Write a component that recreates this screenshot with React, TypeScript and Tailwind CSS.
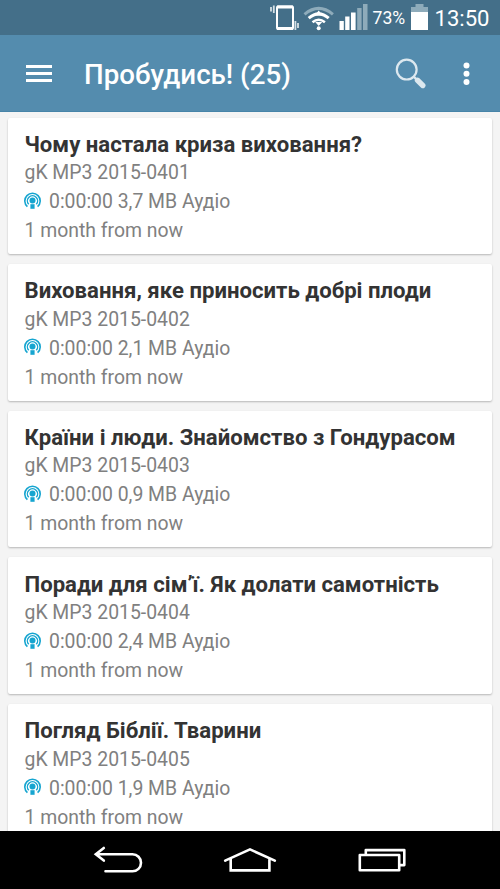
const items = [
  { title: "Чому настала криза виховання?", code: "gK MP3 2015-0401", size: "3,7 MB" },
  { title: "Виховання, яке приносить добрі плоди", code: "gK MP3 2015-0402", size: "2,1 MB" },
  { title: "Країни і люди. Знайомство з Гондурасом", code: "gK MP3 2015-0403", size: "0,9 MB" },
  { title: "Поради для сім’ї. Як долати самотність", code: "gK MP3 2015-0404", size: "2,4 MB" },
  { title: "Погляд Біблії. Тварини", code: "gK MP3 2015-0405", size: "1,9 MB" },
]

function StatusBar() {
  return (
    <div className="flex h-[35px] shrink-0 bg-[#446f89] text-white">
      <svg className="ml-[270px] shrink-0" width="99" height="35" viewBox="270 0 99 35" fill="none">
        {/* vibrate */}
        <rect x="277" y="6.5" width="16" height="22.5" rx="1" stroke="#fff" strokeWidth="2" />
        <path d="M277 7h16M277 28.5h16" stroke="#fff" strokeWidth="3" />
        <path d="M271 7v4.5M273.8 5.5v7.5M295.4 21v9M298 23v5" stroke="#d5e0e6" strokeWidth="1.8" />
        {/* wifi */}
        <path d="M304.5 14.3Q318.7 2.5 332.9 14.3" stroke="#8eabba" strokeWidth="3" />
        <path d="M308.7 18.2Q318.7 9.5 328.7 18.2" stroke="#fff" strokeWidth="3" />
        <path d="M312.5 22.2Q318.7 17.3 324.9 22.2" stroke="#fff" strokeWidth="2.6" />
        <path d="M314.8 15.5l3.9-5 3.9 5zM315.2 22h7l-3.5 4z" fill="#fff" />
        <circle cx="318.7" cy="28.2" r="2" fill="#fff" />
        {/* signal */}
        <path d="M339.5 21h4.3v9h-4.3zM345.2 16.5h4.3v13.5h-4.3zM351 12.5h4.6v17.5h-4.6z" fill="#fff" />
        <path d="M357.2 8h4.4v22h-4.4zM363 4h4.5v26h-4.5z" fill="#8eabba" />
      </svg>
      <span className="ml-[3.5px] w-[38.5px] whitespace-nowrap text-[17.6px] leading-[36px]">73%</span>
      <svg className="shrink-0" width="17" height="35" viewBox="0 0 17 35">
        <path d="M4.5 4h8v3H17v5H0V7h4.5z" fill="#8eabba" />
        <path d="M0 12h17v18H0z" fill="#fff" />
      </svg>
      <span className="ml-[6.5px] whitespace-nowrap text-[22.1px] leading-[37px]">13:50</span>
    </div>
  )
}

function Header() {
  return (
    <header className="flex h-[77px] shrink-0 items-center border-b border-[#4784a8] bg-[#548cae] pt-[2px] text-white">
      <svg className="ml-[26px] shrink-0" width="26" height="20" viewBox="0 0 26 20">
        <path d="M0 2.5h26M0 9.5h26M0 16.5h26" stroke="#fff" strokeWidth="3" />
      </svg>
      <h1 className="ml-8 flex-1 whitespace-nowrap pt-[2px] text-[27.7px] font-medium leading-9">Пробудись! (25)</h1>
      <svg className="mr-[36px] shrink-0" width="32" height="32" viewBox="0 0 32 32" fill="none" stroke="#dce8ef">
        <circle cx="11.7" cy="11.6" r="9.9" strokeWidth="2.2" />
        <path d="M18.7 18.6l3.5 3.5" strokeWidth="2.2" />
        <path d="M22.5 22.3l5.3 5.2" strokeWidth="5.4" strokeLinecap="round" />
      </svg>
      <svg className="mr-[30px] shrink-0" width="7" height="24" viewBox="0 0 7 24" fill="#fff">
        <circle cx="3.5" cy="3.5" r="3" />
        <circle cx="3.5" cy="11.8" r="3" />
        <circle cx="3.5" cy="20" r="3" />
      </svg>
    </header>
  )
}

function PodcastIcon() {
  return (
    <svg className="-ml-[0.5px] mr-2 mb-[3px] shrink-0" width="17" height="17" viewBox="0 0 17 17" fill="none" stroke="#16a5d0">
      <path d="M3.4 14.7A7.7 7.7 0 1 1 13.6 14.7" strokeWidth="1.6" />
      <path d="M4.7 12.3A5.1 5.1 0 1 1 12.3 12.3" strokeWidth="1.4" />
      <circle cx="8.5" cy="8.5" r="3" fill="#16a5d0" stroke="none" />
      <path d="M6.4 12.2h4.2v4.6H6.4z" fill="#16a5d0" stroke="none" />
    </svg>
  )
}

export default function App() {
  return (
    <div className="flex h-[889px] w-[500px] flex-col overflow-hidden bg-[#f4f4f4] font-[Roboto,sans-serif]">
      <StatusBar />
      <Header />
      <main className="flex min-h-0 flex-1 flex-col gap-[10px] overflow-hidden px-2 pt-[5.5px]">
        {items.map(item => (
          <article
            key={item.code}
            className="h-[136.6px] shrink-0 whitespace-nowrap rounded-[2px] bg-white pl-[16.5px] pt-[12.4px] text-[19.4px] leading-[29px] text-[#808080] shadow-[0_1px_2px_rgba(0,0,0,0.25)]"
          >
            <h2 className="-mb-[0.6px] text-[22.15px] font-bold text-[#333]">{item.title}</h2>
            <p>{item.code}</p>
            <p className="flex items-center">
              <PodcastIcon />
              0:00:00 {item.size} Аудіо
            </p>
            <p>1 month from now</p>
          </article>
        ))}
      </main>
      <nav className="flex h-[58px] shrink-0 items-center bg-black">
        <svg className="ml-[93px]" width="50" height="30" viewBox="0 0 50 30" fill="none" stroke="#fff" strokeWidth="2.6" strokeLinecap="round">
          <path d="M10.8 3L2.8 9.3l8 6.3M3 9.3h36.5a8.5 8.5 0 0 1 0 17H12.5" />
        </svg>
        <svg className="ml-[80px]" width="54" height="30" viewBox="0 0 54 30" fill="none" stroke="#fff" strokeWidth="2.6" strokeLinecap="round">
          <path d="M2.2 15.6L27 4.4l24.8 11.2M7.7 14v11.4h38.7V14" />
        </svg>
        <svg className="ml-[80px]" width="50" height="30" viewBox="0 0 50 30" fill="none" stroke="#fff" strokeWidth="2.6" strokeLinejoin="round">
          <path d="M2.8 10h39.4v15.3H2.8zM8.8 10V5.1h38.5v15h-5" />
        </svg>
      </nav>
    </div>
  )
}
